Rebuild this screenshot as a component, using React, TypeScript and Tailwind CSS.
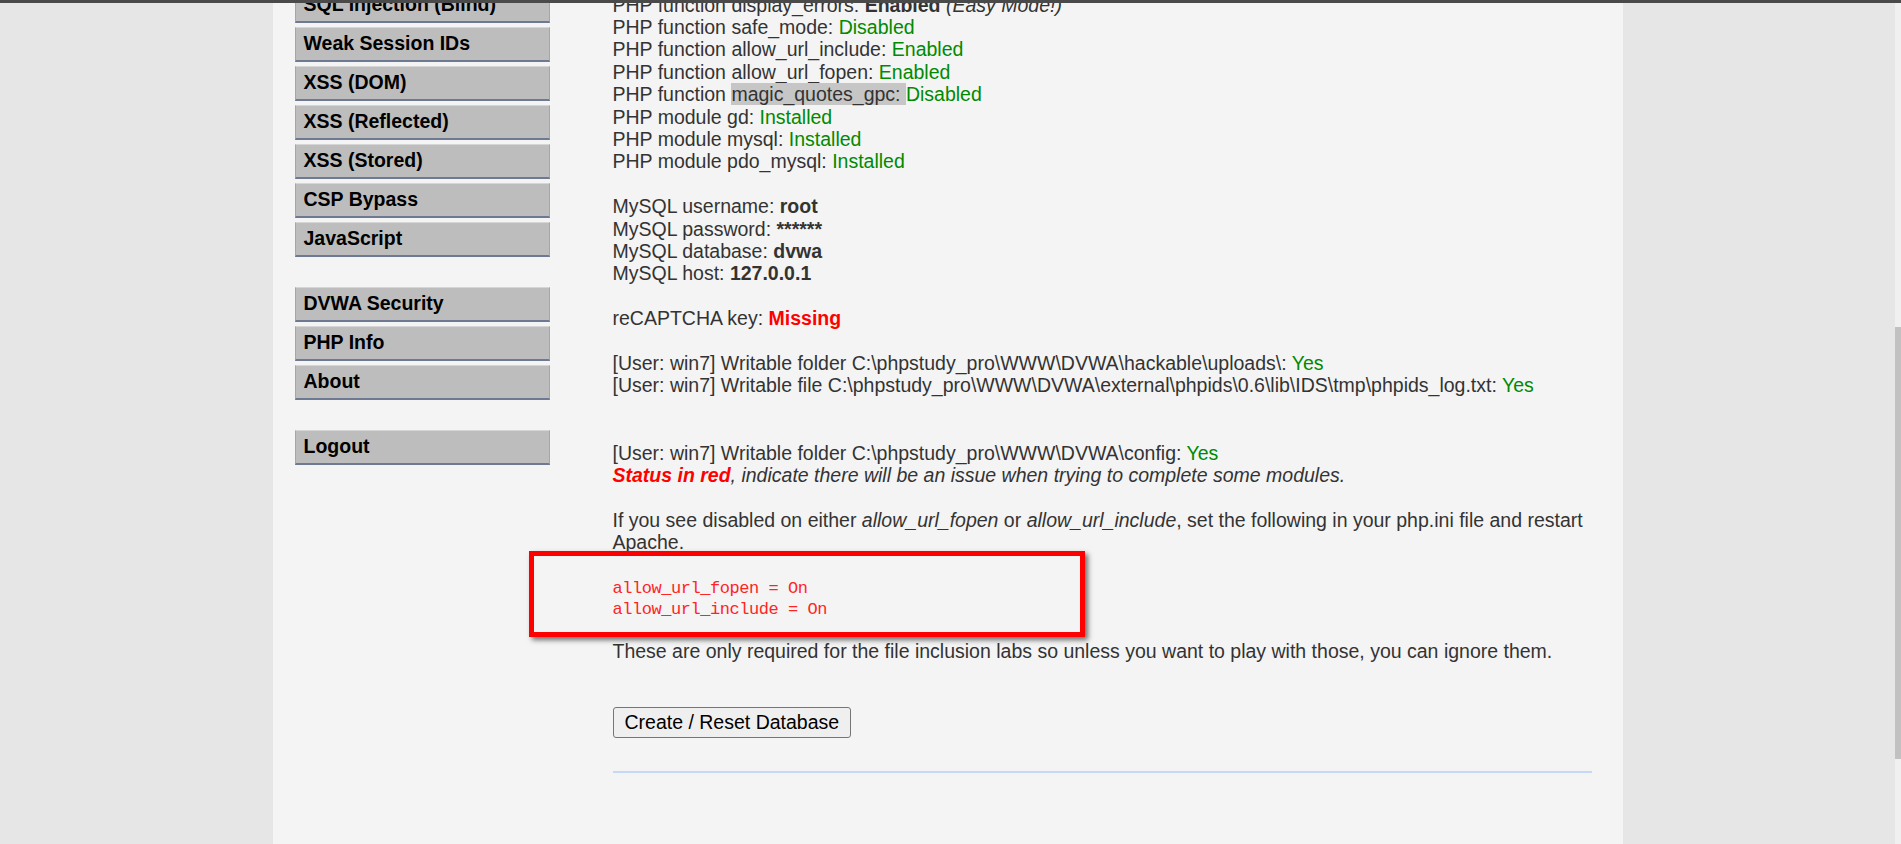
import type { ReactNode } from 'react'

const menuGroups: string[][] = [
  ['SQL Injection (Blind)', 'Weak Session IDs', 'XSS (DOM)', 'XSS (Reflected)', 'XSS (Stored)', 'CSP Bypass', 'JavaScript'],
  ['DVWA Security', 'PHP Info', 'About'],
  ['Logout'],
]

function Ok({ children }: { children: ReactNode }) {
  return <span className="text-[#008a00]">{children}</span>
}

function Line({ children }: { children?: ReactNode }) {
  return <div className="min-h-[22.4px]">{children}</div>
}

function MenuItem({ label }: { label: string }) {
  return (
    <div className="h-[35px] flex items-center pl-[8px] bg-[#bdbdbd] border border-[#a6a6a6] border-t-[#d6d6d6] border-b-2 border-b-[#6e7a91] text-black font-bold text-[19.5px]">
      {label}
    </div>
  )
}

export default function App() {
  return (
    <div className="h-screen overflow-hidden flex flex-col bg-[#e6e6e6] font-['Liberation_Sans',Arial,sans-serif] text-[#333]">
      <div className="h-[3px] shrink-0 bg-[#4a4a4a]" />
      <div className="flex-1 min-h-0 flex">
        <div className="flex-1 min-w-0 overflow-hidden">
          <div className="mx-auto w-[1350px] h-full bg-[#f4f4f4] flex items-start pl-[22px]">
            {/* left menu */}
            <nav className="w-[255px] shrink-0 -mt-[15.5px] flex flex-col gap-[30px]">
              {menuGroups.map((g, i) => (
                <div key={i} className="flex flex-col gap-[4px]">
                  {g.map(l => <MenuItem key={l} label={l} />)}
                </div>
              ))}
            </nav>

            {/* setup check */}
            <main className="ml-[63px] w-[979px] shrink-0 -mt-[9.5px] text-[19.5px] leading-[22.4px]">
              <Line>PHP function display_errors: <b>Enabled</b> <i>(Easy Mode!)</i></Line>
              <Line>PHP function safe_mode: <Ok>Disabled</Ok></Line>
              <Line>PHP function allow_url_include: <Ok>Enabled</Ok></Line>
              <Line>PHP function allow_url_fopen: <Ok>Enabled</Ok></Line>
              <Line>PHP function <span className="bg-[#c6c6c6]">magic_quotes_gpc: </span><Ok>Disabled</Ok></Line>
              <Line>PHP module gd: <Ok>Installed</Ok></Line>
              <Line>PHP module mysql: <Ok>Installed</Ok></Line>
              <Line>PHP module pdo_mysql: <Ok>Installed</Ok></Line>
              <Line />
              <Line>MySQL username: <b>root</b></Line>
              <Line>MySQL password: <b>******</b></Line>
              <Line>MySQL database: <b>dvwa</b></Line>
              <Line>MySQL host: <b>127.0.0.1</b></Line>
              <Line />
              <Line>reCAPTCHA key: <b className="text-[#ff0000]">Missing</b></Line>
              <Line />
              <Line>[User: win7] Writable folder {'C:\\phpstudy_pro\\WWW\\DVWA\\hackable\\uploads\\'}: <Ok>Yes</Ok></Line>
              <Line>[User: win7] Writable file {'C:\\phpstudy_pro\\WWW\\DVWA\\external\\phpids\\0.6\\lib\\IDS\\tmp\\phpids_log.txt'}: <Ok>Yes</Ok></Line>
              <Line />
              <Line />
              <Line>[User: win7] Writable folder {'C:\\phpstudy_pro\\WWW\\DVWA\\config'}: <Ok>Yes</Ok></Line>
              <Line>
                <i><b className="text-[#ff0000]">Status in red</b>, indicate there will be an issue when trying to complete some modules.</i>
              </Line>
              <Line />
              <Line>
                If you see disabled on either <i>allow_url_fopen</i> or <i>allow_url_include</i>, set the following in your php.ini file and restart Apache.
              </Line>

              <div className="relative mt-[24px] mb-[20px]">
                <pre className="font-['Liberation_Mono',monospace] text-[17px] tracking-[-0.45px] leading-[21px] text-[#ff2424]">
                  {'allow_url_fopen = On\nallow_url_include = On'}
                </pre>
                <div className="absolute left-[-84px] top-[-26.5px] w-[556px] h-[86px] border-[5px] border-[#ff0000] shadow-[3px_3px_5px_rgba(0,0,0,0.55)]" />
              </div>

              <Line>These are only required for the file inclusion labs so unless you want to play with those, you can ignore them.</Line>

              <div className="mt-[45px]">
                <button className="h-[31px] px-[11px] rounded-[3px] border border-[#767676] bg-[#efefef] text-black text-[19.5px] leading-none">
                  Create / Reset Database
                </button>
              </div>

              <div className="mt-[33px] h-[2px] bg-[#c5d9f7]" />
            </main>
          </div>
        </div>

        {/* scrollbar */}
        <div className="w-[6px] shrink-0 bg-[#f0f0f0] pt-[324px]">
          <div className="h-[432px] bg-[#c1c1c1]" />
        </div>
      </div>
    </div>
  )
}
